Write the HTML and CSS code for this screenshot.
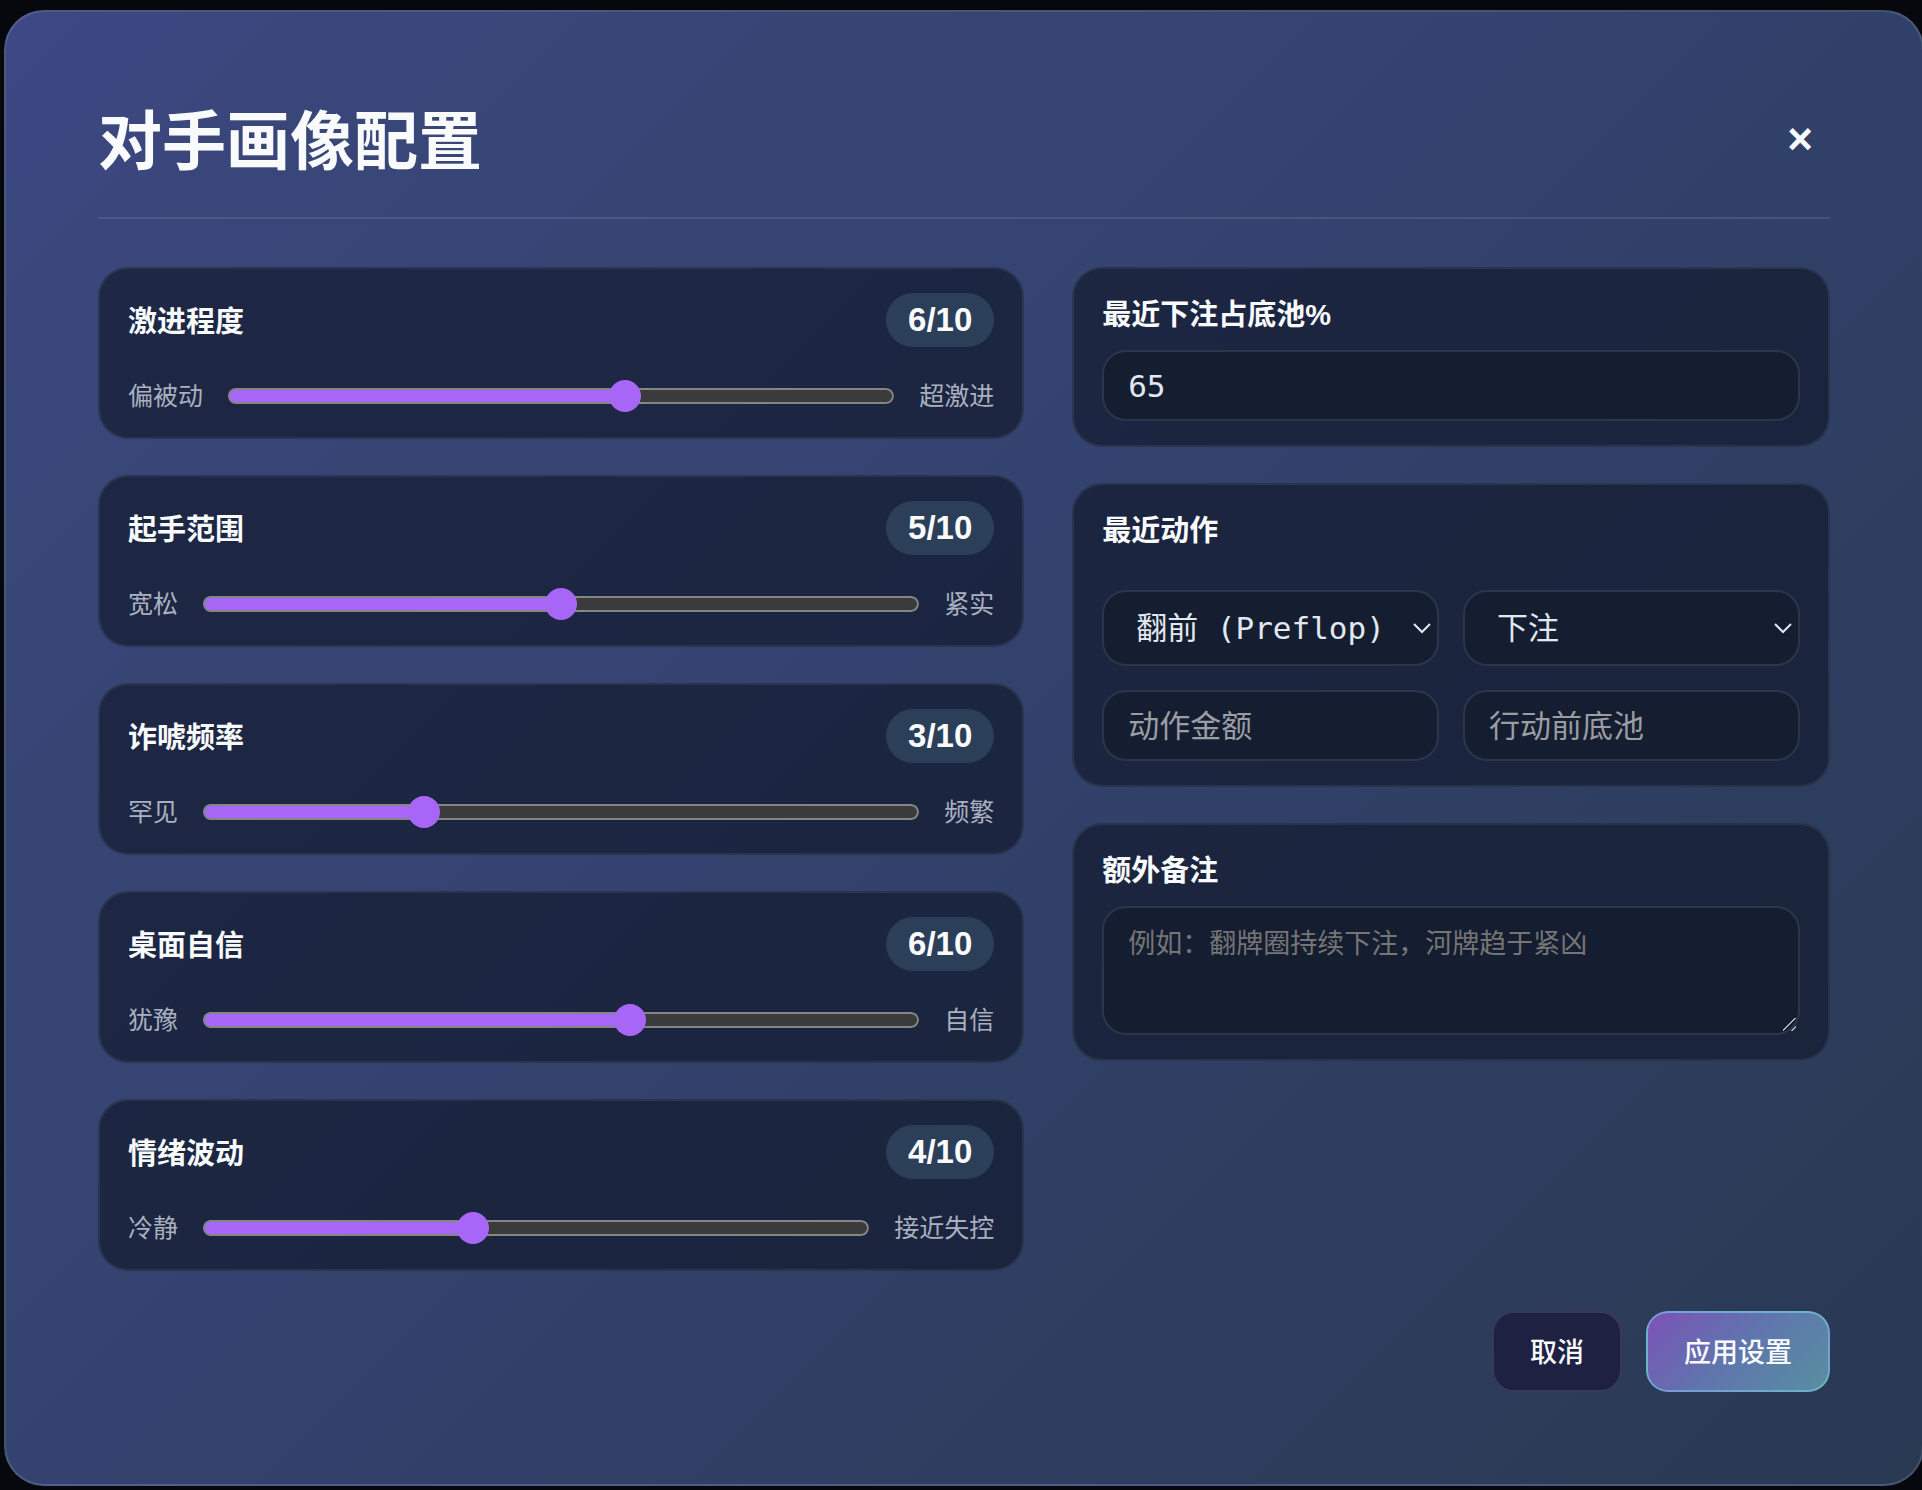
FILE: index.html
```html
<!DOCTYPE html>
<html lang="zh-CN">
<head>
<meta charset="utf-8">
<meta name="viewport" content="width=device-width, initial-scale=1">
<title>对手画像配置</title>
<link rel="stylesheet" href="styles.css">
</head>
<body>
<main class="modal" role="dialog" aria-labelledby="modal-title">
  <header class="modal-header">
    <h1 class="modal-title" id="modal-title">对手画像配置</h1>
    <button class="close-button" type="button" aria-label="关闭">×</button>
  </header>
  <form class="profile-form">
    <div class="columns">
      <div class="column">
        <section class="card slider-card">
          <div class="slider-head">
            <label class="card-label" for="aggression">激进程度</label>
            <output class="badge" for="aggression">6/10</output>
          </div>
          <div class="slider-row">
            <span>偏被动</span>
            <input class="slider" id="aggression" type="range" min="0" max="10" value="6" style="--fill: 60%">
            <span>超激进</span>
          </div>
        </section>
        <section class="card slider-card">
          <div class="slider-head">
            <label class="card-label" for="tightness">起手范围</label>
            <output class="badge" for="tightness">5/10</output>
          </div>
          <div class="slider-row">
            <span>宽松</span>
            <input class="slider" id="tightness" type="range" min="0" max="10" value="5" style="--fill: 50%">
            <span>紧实</span>
          </div>
        </section>
        <section class="card slider-card">
          <div class="slider-head">
            <label class="card-label" for="bluff">诈唬频率</label>
            <output class="badge" for="bluff">3/10</output>
          </div>
          <div class="slider-row">
            <span>罕见</span>
            <input class="slider" id="bluff" type="range" min="0" max="10" value="3" style="--fill: 30%">
            <span>频繁</span>
          </div>
        </section>
        <section class="card slider-card">
          <div class="slider-head">
            <label class="card-label" for="confidence">桌面自信</label>
            <output class="badge" for="confidence">6/10</output>
          </div>
          <div class="slider-row">
            <span>犹豫</span>
            <input class="slider" id="confidence" type="range" min="0" max="10" value="6" style="--fill: 60%">
            <span>自信</span>
          </div>
        </section>
        <section class="card slider-card">
          <div class="slider-head">
            <label class="card-label" for="tilt">情绪波动</label>
            <output class="badge" for="tilt">4/10</output>
          </div>
          <div class="slider-row">
            <span>冷静</span>
            <input class="slider" id="tilt" type="range" min="0" max="10" value="4" style="--fill: 40%">
            <span>接近失控</span>
          </div>
        </section>
      </div>
      <div class="column">
        <section class="card field-card">
          <label class="card-label" for="bet-percent">最近下注占底池%</label>
          <input class="field" id="bet-percent" type="text" inputmode="numeric" value="65">
        </section>
        <section class="card field-card">
          <h2 class="card-label">最近动作</h2>
          <div class="action-grid">
            <div class="select-wrap">
              <select class="field select" aria-label="阶段">
                <option>翻前 (Preflop)</option>
              </select>
              <svg class="chevron" viewBox="0 0 20 12" aria-hidden="true"><path d="M2 2l8 8 8-8"/></svg>
            </div>
            <div class="select-wrap">
              <select class="field select" aria-label="动作">
                <option>下注</option>
              </select>
              <svg class="chevron" viewBox="0 0 20 12" aria-hidden="true"><path d="M2 2l8 8 8-8"/></svg>
            </div>
            <input class="field" type="text" inputmode="numeric" placeholder="动作金额" aria-label="动作金额">
            <input class="field" type="text" inputmode="numeric" placeholder="行动前底池" aria-label="行动前底池">
          </div>
        </section>
        <section class="card field-card">
          <label class="card-label" for="notes">额外备注</label>
          <textarea class="field notes" id="notes" placeholder="例如：翻牌圈持续下注，河牌趋于紧凶"></textarea>
        </section>
      </div>
    </div>
    <footer class="actions">
      <button class="button" type="button">取消</button>
      <button class="button button-primary" type="submit">应用设置</button>
    </footer>
  </form>
</main>
</body>
</html>
```
FILE: styles.css
```css
*,
*::before,
*::after {
  box-sizing: border-box;
}

:root {
  --accent: #a866f7;
  --text: #f8fafc;
  --sans: "Liberation Sans", "Noto Sans CJK SC", sans-serif;
  --mono: "DejaVu Sans Mono", "Noto Sans CJK SC", monospace;
}

body {
  margin: 0;
  padding: 10px 0 4px 4px;
  overflow: hidden;
  background: #07070e;
  color: var(--text);
  font-family: var(--sans);
}

.modal {
  margin-right: -2px;
  padding: 92px;
  border: 2px solid rgba(148, 163, 184, 0.25);
  border-radius: 40px;
  background: linear-gradient(135deg, #3d4885 0%, #394679 12%, #354472 35%, #32416b 52%, #2e3e60 72%, #293952 100%);
}

.modal-header {
  display: flex;
  align-items: center;
  justify-content: space-between;
  padding-bottom: 40px;
  margin-bottom: 48px;
  border-bottom: 2px solid rgba(148, 163, 184, 0.2);
}

.modal-title {
  margin: 0;
  padding-top: 3px;
  font-size: 64px;
  line-height: 70px;
  font-weight: 700;
}

.close-button {
  width: 60px;
  height: 60px;
  padding: 0 0 4px;
  border: 0;
  background: none;
  color: var(--text);
  font: 700 44px/56px var(--sans);
}

.columns {
  display: grid;
  grid-template-columns: 11fr 9fr;
  gap: 48px;
  align-items: start;
}

.column {
  display: grid;
  gap: 36px;
  min-width: 0;
}

.card {
  display: flex;
  flex-direction: column;
  padding: 24px 28px;
  border: 2px solid rgba(148, 163, 184, 0.12);
  border-radius: 30px;
  background: rgba(18, 25, 45, 0.7);
}

.slider-card {
  gap: 32px;
}

.field-card {
  gap: 16px;
}

.card-label {
  margin: 0;
  padding-top: 3px;
  font-size: 29px;
  line-height: 38px;
  font-weight: 700;
}

.slider-head,
.slider-row {
  display: flex;
  align-items: center;
}

.slider-head {
  justify-content: space-between;
}

.badge {
  min-width: 108px;
  padding: 0 20px;
  border-radius: 27px;
  background: #2b3f58;
  font-size: 33px;
  line-height: 54px;
  font-weight: 700;
  text-align: center;
}

.slider-row {
  gap: 25px;
  color: #a9b0c0;
  font-size: 25px;
  line-height: 34px;
}

.slider {
  flex: 1;
  min-width: 0;
  height: 32px;
  margin: 0;
  appearance: none;
  background: none;
}

.slider::-webkit-slider-runnable-track {
  height: 16px;
  border-radius: 8px;
  background: linear-gradient(var(--accent), var(--accent)) 0 0 / var(--fill) 100% no-repeat #3b3b3b;
  box-shadow: inset 0 0 0 2px #858585;
}

.slider::-webkit-slider-thumb {
  width: 32px;
  height: 32px;
  margin-top: -8px;
  appearance: none;
  border-radius: 50%;
  background: var(--accent);
}

.field {
  width: 100%;
  min-width: 0;
  padding: 16px 24px;
  border: 2px solid #2b364a;
  border-radius: 24px;
  background: #151d30;
  color: #e2e8f0;
  font: 400 31px/36px var(--mono);
}

input.field {
  height: 71px;
}

.field::placeholder {
  color: #9b9da5;
  opacity: 1;
}

.action-grid {
  display: grid;
  grid-template-columns: 1fr 1fr;
  gap: 24px;
  margin-top: 24px;
}

.select-wrap {
  display: grid;
  align-items: center;
  min-width: 0;
}

.select-wrap > * {
  grid-area: 1 / 1;
}

.select.field {
  height: 76px;
  padding: 0 32px;
  appearance: none;
}

.chevron {
  width: 20px;
  height: 12px;
  margin-right: 7px;
  justify-self: end;
  pointer-events: none;
  fill: none;
  stroke: #e2e8f0;
  stroke-width: 2;
}

.notes {
  display: block;
  height: 129px;
  padding-top: 18px;
  resize: vertical;
  font-size: 27px;
}

.notes::placeholder {
  color: #757575;
}

.notes::-webkit-resizer {
  background: linear-gradient(135deg, transparent 45%, #b4b4b8 45% 53%, transparent 53% 77%, #b4b4b8 77% 85%, transparent 85%) 0 0 / 13px 13px no-repeat;
}

.actions {
  display: flex;
  justify-content: flex-end;
  gap: 24px;
  margin-top: 40px;
}

.button {
  padding: 22px 36px 18px;
  border: 2px solid #38395a;
  border-radius: 22px;
  background: #1e2141;
  color: var(--text);
  font: 500 27px/37px var(--sans);
}

.button-primary {
  border-color: rgba(126, 224, 240, 0.5);
  background: linear-gradient(135deg, #7c52b8, #5f76ad 50%, #588fa0);
}
```
